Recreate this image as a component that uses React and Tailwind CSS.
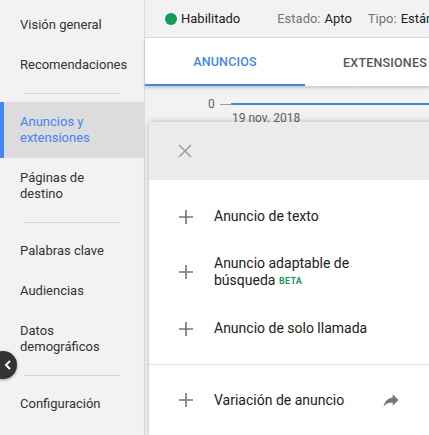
import React from 'react';

const navTop = [
    { label: 'Visión general' },
    { label: 'Recomendaciones' },
];

const Divider = () => <div className="mx-6 my-2 h-px bg-[#d6d6d6]" />;

const NavItem = ({ label, lines, active }) => (
    <div
        className={
            'flex items-center px-5 text-[13px] leading-4 ' +
            (lines === 2 ? 'h-[56px] ' : 'h-[40px] ') +
            (active
                ? 'bg-[#dcdcdc] text-[#4285f4] border-l-4 border-[#4285f4] pl-4'
                : 'text-[#333]')
        }
    >
        <span className={lines === 2 ? 'w-[90px]' : ''}>{label}</span>
    </div>
);

const Plus = () => (
    <svg width="14" height="14" viewBox="0 0 14 14" className="shrink-0">
        <path d="M7 0v14M0 7h14" stroke="#757575" strokeWidth="1.6" />
    </svg>
);

const MenuItem = ({ children, right }) => (
    <div className="flex items-center pl-[30px] pr-[30px]">
        <Plus />
        <div className="ml-[21px] flex-1 text-[14px] leading-[17px] text-[#212121]">{children}</div>
        {right}
    </div>
);

const App = () => {
    return (
        <div className="relative flex h-[435px] w-[429px] overflow-hidden bg-[#f2f2f2] font-['Roboto',sans-serif]">
            {/* sidebar */}
            <aside className="w-[145px] shrink-0 border-r border-[#dadada] bg-[#f2f2f2] pt-[5px]">
                {navTop.map((n) => (
                    <NavItem key={n.label} label={n.label} />
                ))}
                <Divider />
                <NavItem label="Anuncios y extensiones" lines={2} active />
                <NavItem label="Páginas de destino" lines={2} />
                <Divider />
                <NavItem label="Palabras clave" />
                <NavItem label="Audiencias" />
                <NavItem label="Datos demográficos" lines={2} />
                <Divider />
                <NavItem label="Configuración" />
            </aside>

            {/* main */}
            <main className="relative flex min-w-0 flex-1 flex-col">
                <div className="flex h-[38px] shrink-0 items-center gap-[4px] overflow-hidden whitespace-nowrap border-b border-[#dadada] pl-[20px] text-[13px] text-[#212121]">
                    <span className="h-3 w-3 shrink-0 rounded-full bg-[#0f9d58]" />
                    <span className="shrink-0">Habilitado</span>
                    <span className="ml-[33px] shrink-0 text-[#757575]">Estado:</span>
                    <span className="shrink-0">Apto</span>
                    <span className="ml-[12px] shrink-0 text-[#757575]">Tipo:</span>
                    <span className="shrink-0">Estándar</span>
                </div>
                <div className="relative z-10 flex h-[48px] shrink-0 bg-white text-[12.5px] font-medium tracking-[0.2px] shadow-[0_2px_3px_rgba(0,0,0,0.18)]">
                    <div className="flex w-[160px] shrink-0 items-center justify-center border-b-2 border-[#4285f4] pt-[2px] text-[#4285f4]">
                        ANUNCIOS
                    </div>
                    <div className="flex w-[160px] shrink-0 items-center justify-center pt-[2px] text-[#555]">
                        EXTENSIONES
                    </div>
                </div>
                <div className="relative flex-1 pl-[63px] pt-[11px] text-[12px] leading-[14px] text-[#616161]">
                    <div className="flex items-center">
                        <span className="w-[12px]">0</span>
                        <span className="h-px w-[11px] bg-[#9e9e9e]" />
                        <span className="h-[2px] flex-1 bg-[#4285f4]" />
                    </div>
                    <div className="pl-[24px] pt-0">19 nov. 2018</div>
                </div>

                {/* add-ad menu */}
                <div className="absolute bottom-0 left-[4px] right-[-12px] top-[122px] flex flex-col rounded-t-[2px] shadow-[0_0_6px_rgba(0,0,0,0.25)]">
                    <div className="flex h-[58px] shrink-0 items-center bg-[#ebebeb] pl-[29px]">
                        <svg width="14" height="14" viewBox="0 0 14 14">
                            <path d="M1 1l12 12M13 1L1 13" stroke="#a0a0a0" strokeWidth="1.6" />
                        </svg>
                    </div>
                    <div className="flex-1 bg-white pt-[28px]">
                        <MenuItem>Anuncio de texto</MenuItem>
                        <div className="h-[30px]" />
                        <MenuItem>
                            Anuncio adaptable de
                            <br />
                            búsqueda{' '}
                            <sup className="relative top-[-1px] text-[9px] font-bold tracking-[0.3px] text-[#0f9d58]">BETA</sup>
                        </MenuItem>
                        <div className="h-[31px]" />
                        <MenuItem>Anuncio de solo llamada</MenuItem>
                        <div className="mt-[27px] h-px bg-[#e0e0e0]" />
                        <div className="pt-[25px]">
                            <MenuItem
                                right={
                                    <svg width="20" height="20" viewBox="0 0 24 24" className="mr-[10px] shrink-0">
                                        <path
                                            d="M14 9V5l7 7-7 7v-4.1c-5 0-8.5 1.6-11 5.1 1-5 4-10 11-11z"
                                            fill="#757575"
                                        />
                                    </svg>
                                }
                            >
                                Variación de anuncio
                            </MenuItem>
                        </div>
                    </div>
                </div>
            </main>

            {/* collapse toggle */}
            <button className="absolute left-[-11px] top-[351px] flex h-7 w-7 items-center justify-center rounded-full bg-[#333] shadow-[0_1px_3px_rgba(0,0,0,0.4)]">
                <svg width="8" height="10" viewBox="0 0 8 10" className="ml-[10px]">
                    <path d="M6 1L2 5l4 4" stroke="white" strokeWidth="2" fill="none" />
                </svg>
            </button>
        </div>
    );
};

export default App;
